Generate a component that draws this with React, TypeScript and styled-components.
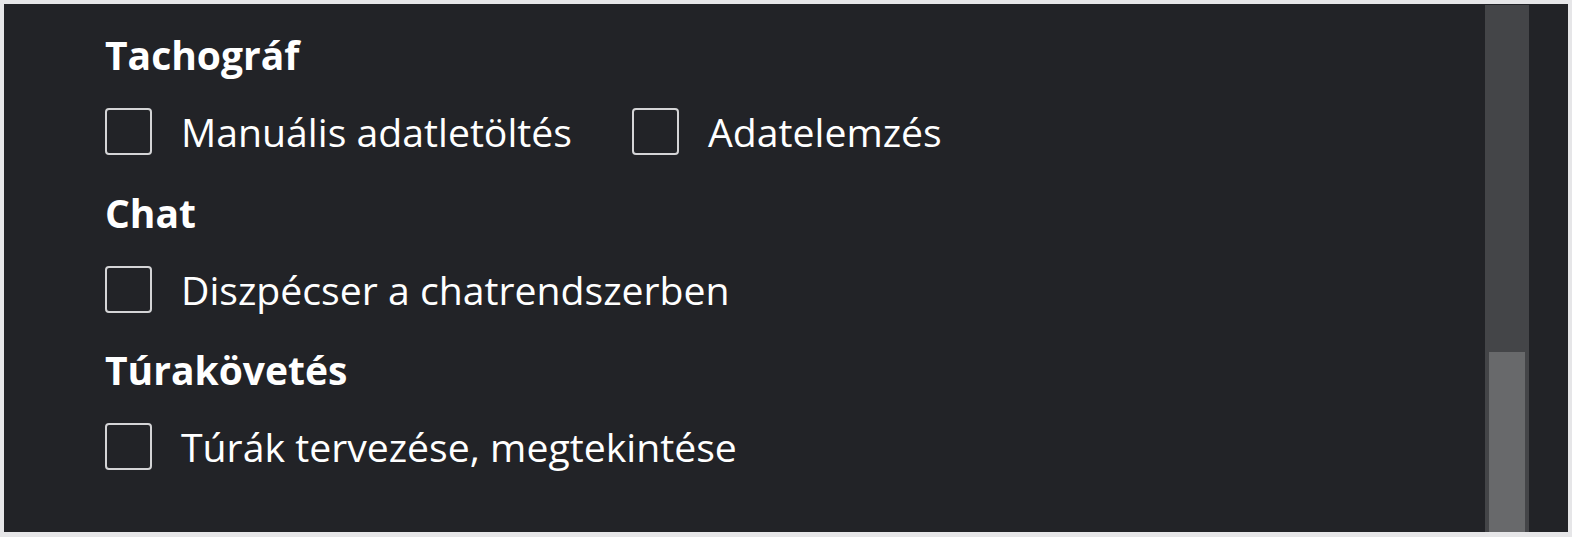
import styled, { createGlobalStyle } from 'styled-components';

const GlobalStyle = createGlobalStyle`
  html, body {
    margin: 0;
    padding: 0;
    background: #e6e6e8;
  }
  body {
    font-family: 'Open Sans', 'Noto Sans', sans-serif;
  }
`;

interface Section {
  title: string;
  items: string[];
}

const sections: Section[] = [
  { title: 'Tachográf', items: ['Manuális adatletöltés', 'Adatelemzés'] },
  { title: 'Chat', items: ['Diszpécser a chatrendszerben'] },
  { title: 'Túrakövetés', items: ['Túrák tervezése, megtekintése'] },
];

const App = () => {
  return (
    <>
      <GlobalStyle />
      <Frame>
        <Panel>
          <Content>
            {sections.map((section) => (
              <Group key={section.title}>
                <Heading>{section.title}</Heading>
                <Row>
                  {section.items.map((item) => (
                    <Option key={item}>
                      <Box type="checkbox" />
                      <Label>{item}</Label>
                    </Option>
                  ))}
                </Row>
              </Group>
            ))}
          </Content>
          <Track>
            <Thumb />
          </Track>
        </Panel>
      </Frame>
    </>
  );
};

export default App;

const Frame = styled.div`
  width: 1572px;
  height: 537px;
  box-sizing: border-box;
  padding: 4px 4px 5px 4px;
`;

const Panel = styled.div`
  height: 100%;
  background: #222327;
  display: flex;
  overflow: hidden;
`;

const Content = styled.div`
  flex: 1;
  padding: 24px 0 0 101px;
  display: flex;
  flex-direction: column;
  gap: 27.5px;
`;

const Group = styled.div`
  display: flex;
  flex-direction: column;
  gap: 24px;
`;

const Heading = styled.div`
  color: #ffffff;
  font-size: 39px;
  font-weight: 700;
  line-height: 53px;
`;

const Row = styled.div`
  display: flex;
  align-items: center;
  gap: 60px;
`;

const Option = styled.label`
  display: flex;
  align-items: center;
  gap: 29px;
`;

const Box = styled.input`
  appearance: none;
  margin: 0;
  width: 47px;
  height: 47px;
  box-sizing: border-box;
  border: 2px solid #d4d4d6;
  border-radius: 4px;
  background: transparent;
`;

const Label = styled.span`
  color: #ffffff;
  font-size: 39.2px;
  line-height: 53px;
`;

const Track = styled.div`
  width: 44px;
  margin: 1px 39px 0 0;
  background: #444548;
  display: flex;
  flex-direction: column;
  justify-content: flex-end;
  align-items: center;
`;

const Thumb = styled.div`
  width: 36px;
  height: 180px;
  background: #68696b;
`;
